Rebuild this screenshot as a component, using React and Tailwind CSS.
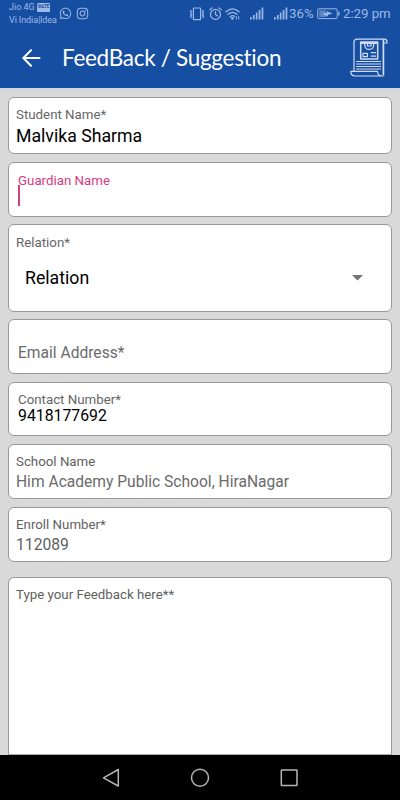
import React from "react";
import { FaWhatsapp, FaInstagram } from "react-icons/fa";

function Signal() {
    return (
        <svg width="14" height="13" viewBox="0 0 14 13" fill="currentColor">
            <rect x="0" y="10" width="1.7" height="2.5" />
            <rect x="2.9" y="8" width="1.7" height="4.5" />
            <rect x="5.8" y="5.5" width="1.7" height="7" />
            <rect x="8.7" y="3" width="1.7" height="9.5" />
            <rect x="11.6" y="0.5" width="1.7" height="12" />
        </svg>
    );
}

function StatusBar() {
    return (
        <div className="flex h-[28px] items-start text-[#9db9e6]">
            <div className="w-[50px] ml-[9px] pt-[1px] text-[9px] leading-[13px] whitespace-nowrap">
                <div className="flex items-center gap-[2px]">
                    <span>Jio 4G</span>
                    <span className="flex h-[9px] w-[13px] shrink-0 items-center justify-center rounded-[1px] bg-[#9db9e6] text-[4.5px] leading-none font-bold tracking-[-0.2px] text-[#164ea1]">VoLTE</span>
                </div>
                <div className="tracking-[-0.1px]">Vi India|Idea</div>
            </div>
            <FaWhatsapp size={13} className="mt-[7px]" />
            <FaInstagram size={13} className="mt-[7px] ml-[4px]" />

            {/* Vibrate, alarm, wifi */}
            <svg className="mt-[7px] ml-[100px]" width="16" height="14" viewBox="0 0 16 14" fill="none" stroke="currentColor" strokeWidth="1.2">
                <rect x="4.4" y="1" width="7.2" height="11.6" rx="0.6" />
                <path d="M2.5 3 L1.5 4.3 L2.5 5.6 L1.5 6.9 L2.5 8.2 L1.5 9.5 L2.5 10.8" />
                <path d="M13.5 3 L14.5 4.3 L13.5 5.6 L14.5 6.9 L13.5 8.2 L14.5 9.5 L13.5 10.8" />
            </svg>
            <svg className="mt-[7px] ml-[4px]" width="13" height="14" viewBox="0 0 13 14" fill="none" stroke="currentColor" strokeWidth="1.2" strokeLinecap="round">
                <circle cx="6.5" cy="7.4" r="5" />
                <path d="M6.5 4.5 V7.5 L8.5 9 M0.8 2.8 L3.2 0.9 M12.2 2.8 L9.8 0.9" />
            </svg>
            <svg className="mt-[7px] ml-[3px]" width="16" height="14" viewBox="0 0 16 14" fill="none" stroke="currentColor" strokeWidth="1.3" strokeLinecap="round">
                <path d="M1 4.7 Q7.5 -1 14 4.7 M3.1 7.3 Q7.5 3.4 11.9 7.3 M5.2 9.7 Q7.5 7.7 9.5 9.3" />
                <circle cx="7.4" cy="11.4" r="0.7" fill="currentColor" />
                <path d="M11.3 12 V9.6 M13.7 9.6 V12" strokeWidth="1" />
            </svg>
            <div className="mt-[7px] ml-[9px]"><Signal /></div>
            <div className="mt-[7px] ml-[10px]"><Signal /></div>
            <span className="mt-[5px] ml-[1px] w-[27px] text-[13.3px] leading-[18px] whitespace-nowrap">36%</span>
            <svg className="mt-[8px] ml-[1px]" width="24" height="12" viewBox="0 0 24 12" fill="none" stroke="currentColor">
                <rect x="0.7" y="0.8" width="19.5" height="9.8" rx="1" />
                <rect x="2.2" y="2.3" width="7" height="6.8" fill="currentColor" stroke="none" opacity="0.5" />
                <path d="M5 5.7 L10 4.7 V3 L15.5 5.7 L11 6.7 V8.4 Z" fill="currentColor" stroke="none" />
                <path d="M21.9 3.8 V7.6" strokeWidth="1.3" />
            </svg>
            <span className="mt-[5px] ml-[2px] text-[13.3px] leading-[18px] tracking-[-0.05px] whitespace-nowrap">2:29 pm</span>
        </div>
    );
}

function ScrollIcon() {
    return (
        <svg width="38" height="40" viewBox="0 0 38 40" fill="none" stroke="#cfdcf3" strokeWidth="1.2" strokeLinejoin="round">
            <path d="M4 33 V4 Q4 1.2 7 1.2 H35 Q37.3 1.6 37 5 H33.2" />
            <path d="M33.4 1.4 V37.5" strokeWidth="1.7" />
            <path d="M4 33.3 H0.8 Q0.8 38 5 38 H33.5 M4 33.3 H27.5 Q27.5 37.8 31.5 37.8" />
            <rect x="10.7" y="4" width="17" height="17" strokeWidth="1.5" />
            <path d="M10.5 5 H28" strokeWidth="2" />
            <path d="M14.8 4.8 V8 Q15.5 11.4 19.2 11.4 Q22.9 11.4 23.6 8 V4.8 M17.5 5 V8 H21 V5" />
            <rect x="13" y="15.3" width="4.4" height="3.3" />
            <path d="M20.8 14.7 H26 M20.8 18.2 H26" />
            <path d="M6.2 23.5 H31 M6.2 26 H31 M6.2 28.5 H31 M6.2 31 H31" strokeWidth="1" />
        </svg>
    );
}

function Card({ className, children }) {
    return (
        <div className={`rounded-[6px] border border-[#999] bg-white whitespace-nowrap ${className}`}>
            {children}
        </div>
    );
}

export default function App() {
    return (
        <div className="flex h-[800px] w-[400px] flex-col overflow-hidden bg-[#d9d9d9] font-[Roboto,sans-serif]">
            <header className="h-[89px] shrink-0 border-b border-[#c8d6ea] bg-[#164ea1]">
                <StatusBar />
                <div className="flex h-[60px] items-center">
                    <svg className="ml-[22px]" width="19" height="18" viewBox="0 0 19 18" fill="none" stroke="white" strokeWidth="2" strokeLinecap="round">
                        <path d="M17.5 9 H2 M9 1.3 L1.3 9 L9 16.7" />
                    </svg>
                    <h1 className="ml-[21px] w-[220px] font-[Lato,sans-serif] text-[22.5px] leading-[28px] tracking-[-0.3px] whitespace-nowrap text-white">
                        FeedBack / Suggestion
                    </h1>
                    <div className="ml-[68px]"><ScrollIcon /></div>
                </div>
            </header>

            <main className="flex min-h-0 flex-1 flex-col px-[8px] pt-[8px]">
                <Card className="h-[57px] pt-[8px] pl-[7px]">
                    <div className="text-[13.3px] leading-[18px] text-[#666]">Student Name*</div>
                    <div className="mt-[2px] text-[17.7px] leading-[20px] text-black">Malvika Sharma</div>
                </Card>

                <Card className="mt-[8px] h-[55px] pt-[9px] pl-[9px]">
                    <div className="text-[13.3px] leading-[18px] text-[#d43d7e]">Guardian Name</div>
                    <div className="-mt-[5px] h-[21px] w-[2px] bg-[#d43d7e]" />
                </Card>

                <Card className="mt-[7px] h-[88px] pt-[9px] pl-[7px]">
                    <div className="text-[13.3px] leading-[18px] text-[#666]">Relation*</div>
                    <div className="mt-[15px] flex items-center justify-between pr-[28px] pl-[9px]">
                        <span className="text-[17.7px] leading-[22px] text-black">Relation</span>
                        <svg width="11" height="6" viewBox="0 0 11 6" fill="#757575"><path d="M0 0 H11 L5.5 5.5 Z" /></svg>
                    </div>
                </Card>

                <Card className="mt-[7px] h-[55px] pt-[22px] pl-[9px]">
                    <div className="text-[15.6px] leading-[22px] text-[#6b6b6b]">Email Address*</div>
                </Card>

                <Card className="mt-[8px] h-[54px] pt-[8px] pl-[9px]">
                    <div className="text-[13.3px] leading-[18px] text-[#666]">Contact Number*</div>
                    <div className="-mt-[2px] text-[15.8px] leading-[18px] text-black">9418177692</div>
                </Card>

                <Card className="mt-[8px] h-[55px] pt-[8px] pl-[7px]">
                    <div className="text-[13.3px] leading-[18px] text-[#5f5f5f]">School Name</div>
                    <div className="mt-[1px] text-[15.6px] leading-[20px] text-[#6b6b6b]">Him Academy Public School, HiraNagar</div>
                </Card>

                <Card className="mt-[8px] h-[55px] pt-[8px] pl-[7px]">
                    <div className="text-[13.3px] leading-[18px] text-[#5f5f5f]">Enroll Number*</div>
                    <div className="mt-[1px] text-[15.7px] leading-[20px] text-[#5f5f5f]">112089</div>
                </Card>

                <Card className="mt-[15px] min-h-0 flex-1 rounded-b-none border-b-[#aaa] pt-[8px] pl-[7px]">
                    <div className="text-[13.3px] leading-[18px] text-[#5f5f5f]">Type your Feedback here**</div>
                </Card>
            </main>

            {/* Android navigation */}
            <nav className="flex h-[45px] shrink-0 items-center bg-black pl-[102px]">
                <svg width="196" height="20" viewBox="0 0 196 20" fill="none" stroke="#b5b5b5" strokeWidth="1.5" strokeLinejoin="round">
                    <path d="M16.3 1.5 V18 L1.5 9.8 Z" />
                    <circle cx="98" cy="9.8" r="8.5" />
                    <rect x="179.3" y="1.9" width="15.7" height="15.7" rx="0.6" />
                </svg>
            </nav>
        </div>
    );
}
